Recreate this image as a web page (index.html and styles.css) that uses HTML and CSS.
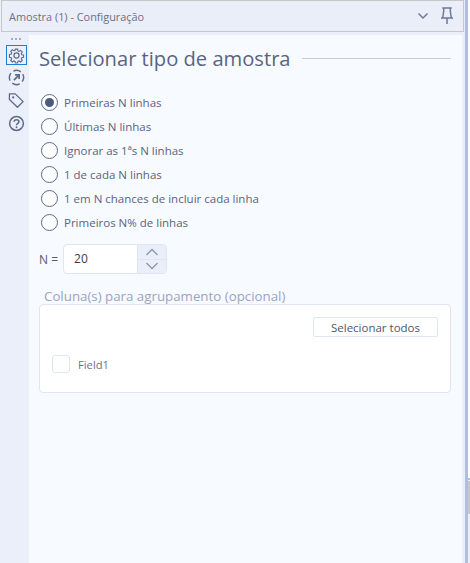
FILE: index.html
```html
<!DOCTYPE html>
<html lang="pt">
<head>
<meta charset="utf-8">
<title>Amostra (1) - Configuração</title>
<link rel="stylesheet" href="styles.css">
</head>
<body>
<div class="app">
  <div class="panel">
    <header class="titlebar">
      <span class="title">Amostra (1) - Configuração</span>
      <svg class="chev" width="12" height="8" viewBox="0 0 12 8"><path d="M1.500 1.500 6 6l4.500-4.500" fill="none" stroke="#6f7a96" stroke-width="1.500"/></svg>
      <svg class="pin" width="14" height="18" viewBox="0 0 14 18"><path d="M2.200 1h9.600M3.700 1v3l-.9 6.500M10.300 1v3l.9 6.500M1 11h12M7 11v6" fill="none" stroke="#6f7a96" stroke-width="1.500"/></svg>
    </header>
    <div class="body">
      <nav class="rail">
        <div class="dots">
          <i></i><i></i><i></i>
        </div>
        <div class="tab active">
          <svg width="18" height="18" viewBox="0 0 18 18"><g fill="none" stroke="#5e6a8c" stroke-width="1.300"><circle cx="9" cy="9" r="2.700"/><path d="M7.700 1.500h2.600l.4 2.100 1.400.6 1.800-1.200 1.900 1.900-1.200 1.800.6 1.400 2.100.4v2.600l-2.100.4-.6 1.400 1.200 1.800-1.900 1.900-1.800-1.200-1.400.6-.4 1.900H7.700l-.4-1.900-1.400-.6-1.800 1.200-1.900-1.900 1.200-1.800-.6-1.400-2.100-.4V7.700l2.100-.4.600-1.400-1.200-1.800 1.900-1.900 1.800 1.200 1.400-.6z" transform="translate(.9 .9) scale(.9)"/></g></svg>
        </div>
        <div class="tab">
          <svg width="18" height="18" viewBox="0 0 18 18"><g fill="none" stroke="#5e6a8c" stroke-width="1.500"><circle cx="9" cy="9" r="7.500" stroke-dasharray="8.300 3.500" transform="rotate(-28 9 9)"/><path d="M6.300 11.700 11.500 6.500" stroke-width="1.800"/><path d="M7.500 6.200h4.300v4.300" stroke-width="1.800"/></g></svg>
        </div>
        <div class="tab">
          <svg width="18" height="18" viewBox="0 0 18 18"><path d="M1.500 2h6.200l8.300 8.200-6 6L1.500 8z" fill="none" stroke="#5e6a8c" stroke-width="1.400" stroke-linejoin="round"/><circle cx="5.500" cy="5.800" r="1.200" fill="#5e6a8c"/></svg>
        </div>
        <div class="tab">
          <svg width="18" height="18" viewBox="0 0 18 18"><circle cx="9" cy="9" r="7.300" fill="none" stroke="#5e6a8c" stroke-width="1.600"/><path d="M6.500 7.200C6.500 5.700 7.600 5 9 5s2.600.8 2.600 2.100c0 1.800-2.600 1.900-2.600 3.700" fill="none" stroke="#5e6a8c" stroke-width="1.600"/><circle cx="9" cy="13" r="1" fill="#5e6a8c"/></svg>
        </div>
      </nav>
      <main class="content">
        <div class="heading">
          <h1>Selecionar tipo de amostra</h1>
          <span class="rule"></span>
        </div>
        <ul class="options">
          <li class="opt"><span class="radio on"></span>Primeiras N linhas</li>
          <li class="opt"><span class="radio"></span>Últimas N linhas</li>
          <li class="opt"><span class="radio"></span>Ignorar as 1ªs N linhas</li>
          <li class="opt"><span class="radio"></span>1 de cada N linhas</li>
          <li class="opt"><span class="radio"></span>1 em N chances de incluir cada linha</li>
          <li class="opt"><span class="radio"></span>Primeiros N% de linhas</li>
        </ul>
        <div class="nrow">
          <span class="nlabel">N =</span>
          <div class="spin">
            <span class="val">20</span>
            <div class="arrows">
              <span class="arrow"><svg width="14" height="8" viewBox="0 0 14 8"><path d="M1.500 7 7 1.500 12.500 7" fill="none" stroke="#8c96b2" stroke-width="1.300"/></svg></span>
              <span class="arrow"><svg width="14" height="8" viewBox="0 0 14 8"><path d="M1.500 1 7 6.500 12.500 1" fill="none" stroke="#8c96b2" stroke-width="1.300"/></svg></span>
            </div>
          </div>
        </div>
        <div class="grouplabel">Coluna(s) para agrupamento (opcional)</div>
        <section class="group">
          <div class="grouptop"><button class="btn">Selecionar todos</button></div>
          <label class="field"><span class="check"></span>Field1</label>
        </section>
      </main>
    </div>
  </div>
  <div class="edge"></div>
  <aside class="side">
    <div class="sidepane"><span class="sidethumb"></span></div>
  </aside>
</div>
</body>
</html>
```

FILE: styles.css
```css
* { box-sizing: border-box; }
html, body { margin: 0; height: 100%; overflow: hidden; background: #fff; }
body { font-family: "Open Sans", "Noto Sans", sans-serif; font-size: 11.500px; color: #5a6480; }
.app { display: flex; width: 470px; height: 563px; }
.panel { width: 465px; height: 563px; flex: none; display: flex; flex-direction: column; background: #eaeff9; padding-left: 1px; }
.titlebar { height: 32px; flex: none; margin-right: 1px; display: flex; align-items: center; background: #e9eef9; border: 1px solid #c6c8cb; padding: 0 9px 0 7px; }
.title { flex: 1; font-size: 10.900px; color: #6b7287; }
.chev { margin-right: 11px; }
.body { flex: 1; display: flex; padding-top: 3px; min-height: 0; }
.rail { width: 28px; flex: none; display: flex; flex-direction: column; align-items: center; }
.dots { height: 10px; display: flex; gap: 2px; justify-content: center; padding-top: 3px; margin-left: 2px; }
.dots i { width: 2px; height: 2px; background: #a3abc0; }
.tab { width: 21px; height: 20px; margin-left: 2px; margin-bottom: 3px; display: flex; align-items: center; justify-content: center; border: 1px solid transparent; }
.tab svg { width: 17px; height: 17px; }
.tab.active { border: 1px solid #1d7fd6; margin-bottom: 2px; }
.content { flex: 1; margin-right: 3px; background: #f7faff; padding: 7px 11px 0 10px; min-width: 0; }
.heading { display: flex; align-items: center; height: 31px; gap: 11px; }
h1 { margin: 0; font-size: 20.150px; font-weight: 400; color: #5a6480; white-space: nowrap; }
.rule { flex: 1; height: 1px; background: #c9ccd3; margin-top: 2px; }
.options { list-style: none; margin: 17px 0 0; padding: 0 0 0 2px; }
.opt { height: 24px; display: flex; align-items: center; gap: 6px; white-space: nowrap; }
.radio { width: 17px; height: 17px; border-radius: 50%; border: 1.500px solid #5e6a8c; background: #fff; display: flex; align-items: center; justify-content: center; }
.radio.on::after { content: ""; width: 9px; height: 9px; border-radius: 50%; background: #4d5a80; }
.nrow { display: flex; align-items: center; margin-top: 10px; height: 30px; gap: 5px; }
.nlabel { color: #5a5a70; font-size: 12px; }
.spin { width: 104px; height: 30px; display: flex; border: 1px solid #dfe5f3; border-radius: 4px; background: #fff; }
.val { flex: 1; padding-left: 10px; line-height: 28px; color: #3c3c50; font-size: 12px; }
.arrows { width: 29px; display: flex; flex-direction: column; background: #e9eef9; border-left: 1px solid #dfe5f3; border-radius: 0 3px 3px 0; }
.arrow { flex: 1; display: flex; align-items: center; justify-content: center; }
.arrow + .arrow { border-top: 1px solid #dfe5f3; }
.grouplabel { margin-top: 14px; padding-left: 5px; height: 16px; line-height: 17px; font-size: 13.300px; color: #9aa5c0; white-space: nowrap; }
.group { height: 89px; background: #fff; border: 1px solid #dfe5f3; border-radius: 4px; padding: 12px 12px 0 12px; }
.grouptop { display: flex; justify-content: flex-end; }
.btn { width: 125px; height: 20px; padding: 0; background: #fff; border: 1px solid #dfe5f3; border-radius: 2px; font: inherit; color: #4d5570; }
.field { display: flex; align-items: center; gap: 8px; margin-top: 18px; height: 18px; color: #6b7287; font-size: 11.200px; }
.check { width: 18px; height: 18px; border: 1px solid #dfe5f3; border-radius: 3px; background: #fff; }
.edge { width: 3px; height: 563px; flex: none; background: #aebfe0; }
.side { flex: 1; display: flex; flex-direction: column; justify-content: flex-end; }
.sidepane { height: 85px; background: #eef0f6; border-top: 2px solid #aebfe0; padding-top: 1px; }
.sidethumb { display: block; width: 2px; height: 33px; background: #c8c8cc; }
```
